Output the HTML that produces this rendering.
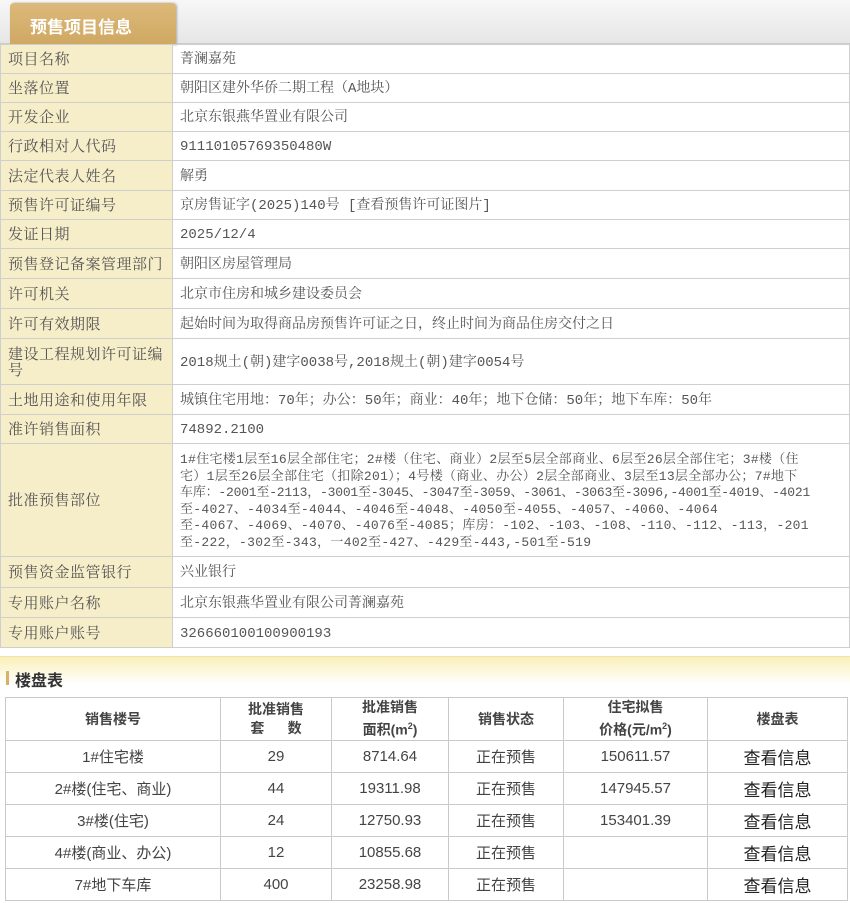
<!DOCTYPE html>
<html><head><meta charset="utf-8"><style>
*{margin:0;padding:0;box-sizing:border-box}
body{width:850px;height:903px;background:#fff;overflow:hidden;font-family:"Liberation Mono","Noto Serif CJK SC",serif;color:#555}
.hdr{position:absolute;left:0;top:0;width:850px;height:44px;background:linear-gradient(#f7f7f7,#e6e6e6);border-bottom:1px solid #ccc}
.tab{position:absolute;left:10px;top:3px;width:166px;height:42px;background:linear-gradient(#dcb97a,#cfa862);border-radius:4px 4px 0 0;color:#fff;font:bold 17px "Liberation Sans","Noto Sans CJK SC",sans-serif;padding:10px 0 0 20px;box-shadow:1px 0 2px #aaa}
table.a{position:absolute;left:0;top:44px;width:850px;border-collapse:collapse;table-layout:fixed;font-size:14px}
table.a td{border:1px solid #cfcfcf;padding:3px 7px 0;line-height:16.5px;vertical-align:middle;white-space:nowrap}
table.a td:first-child{background:#f6edc9;width:172px;font-family:"Liberation Serif","Noto Serif CJK SC",serif;font-size:15px;white-space:normal;letter-spacing:.5px}
.sec{position:absolute;left:0;top:656px;width:850px;height:40px;background:linear-gradient(#faf0b8,#fff 70%);border-top:1px solid #eee2b0}
.sec b{position:absolute;left:15px;top:10px;font:bold 16px "Liberation Sans","Noto Sans CJK SC",sans-serif;color:#333}
.sec i{position:absolute;left:6px;top:14px;width:3px;height:14px;background:#d8b06a}
table.b{position:absolute;left:5px;top:697px;width:842px;border-collapse:collapse;table-layout:fixed;font:15px "Liberation Sans","Noto Sans CJK SC",sans-serif;color:#444;text-align:center}
table.b td{border:1px solid #c9c9c9;height:32px}
table.b tr.h td{font-weight:bold;font-size:14px;height:43px;line-height:19px;color:#444}
table.b td.v{font-size:17px;color:#222}
sup{font-size:9px}
</style></head><body>
<div class="hdr"><div class="tab">预售项目信息</div></div>
<table class="a">
<tr style="height:29px"><td>项目名称</td><td>菁澜嘉苑</td></tr>
<tr style="height:29px"><td>坐落位置</td><td>朝阳区建外华侨二期工程（A地块）</td></tr>
<tr style="height:29px"><td>开发企业</td><td>北京东银燕华置业有限公司</td></tr>
<tr style="height:29px"><td>行政相对人代码</td><td>91110105769350480W</td></tr>
<tr style="height:30px"><td>法定代表人姓名</td><td>解勇</td></tr>
<tr style="height:29px"><td>预售许可证编号</td><td>京房售证字(2025)140号 [查看预售许可证图片]</td></tr>
<tr style="height:29px"><td>发证日期</td><td>2025/12/4</td></tr>
<tr style="height:30px"><td>预售登记备案管理部门</td><td>朝阳区房屋管理局</td></tr>
<tr style="height:30px"><td>许可机关</td><td>北京市住房和城乡建设委员会</td></tr>
<tr style="height:30px"><td>许可有效期限</td><td>起始时间为取得商品房预售许可证之日，终止时间为商品住房交付之日</td></tr>
<tr style="height:46px"><td>建设工程规划许可证编号</td><td>2018规土(朝)建字0038号,2018规土(朝)建字0054号</td></tr>
<tr style="height:30px"><td>土地用途和使用年限</td><td>城镇住宅用地：70年；办公：50年；商业：40年；地下仓储：50年；地下车库：50年</td></tr>
<tr style="height:29px"><td>准许销售面积</td><td>74892.2100</td></tr>
<tr style="height:113px"><td>批准预售部位</td><td style="font-size:13px;letter-spacing:.3px">1#住宅楼1层至16层全部住宅；2#楼（住宅、商业）2层至5层全部商业、6层至26层全部住宅；3#楼（住<br>宅）1层至26层全部住宅（扣除201）；4号楼（商业、办公）2层全部商业、3层至13层全部办公；7#地下<br><span style="letter-spacing:-.2px">车库：-2001至-2113，-3001至-3045、-3047至-3059、-3061、-3063至-3096,-4001至-4019、-4021</span><br>至-4027、-4034至-4044、-4046至-4048、-4050至-4055、-4057、-4060、-4064<br>至-4067、-4069、-4070、-4076至-4085；库房：-102、-103、-108、-110、-112、-113，-201<br>至-222，-302至-343，一402至-427、-429至-443,-501至-519</td></tr>
<tr style="height:31px"><td>预售资金监管银行</td><td>兴业银行</td></tr>
<tr style="height:30px"><td>专用账户名称</td><td>北京东银燕华置业有限公司菁澜嘉苑</td></tr>
<tr style="height:30px"><td>专用账户账号</td><td>326660100100900193</td></tr>
</table>
<div class="sec"><i></i><b>楼盘表</b></div>
<table class="b">
<colgroup><col style="width:215px"><col style="width:111px"><col style="width:117px"><col style="width:115px"><col style="width:144px"><col style="width:140px"></colgroup>
<tr class="h"><td>销售楼号</td><td>批准销售<br>套&nbsp;&nbsp;&nbsp;&nbsp;&nbsp;&nbsp;数</td><td>批准销售<br>面积(m<sup>2</sup>)</td><td>销售状态</td><td>住宅拟售<br>价格(元/m<sup>2</sup>)</td><td>楼盘表</td></tr>
<tr><td>1#住宅楼</td><td>29</td><td>8714.64</td><td>正在预售</td><td>150611.57</td><td class="v">查看信息</td></tr>
<tr><td>2#楼(住宅、商业)</td><td>44</td><td>19311.98</td><td>正在预售</td><td>147945.57</td><td class="v">查看信息</td></tr>
<tr><td>3#楼(住宅)</td><td>24</td><td>12750.93</td><td>正在预售</td><td>153401.39</td><td class="v">查看信息</td></tr>
<tr><td>4#楼(商业、办公)</td><td>12</td><td>10855.68</td><td>正在预售</td><td></td><td class="v">查看信息</td></tr>
<tr><td>7#地下车库</td><td>400</td><td>23258.98</td><td>正在预售</td><td></td><td class="v">查看信息</td></tr>
</table>
</body></html>
